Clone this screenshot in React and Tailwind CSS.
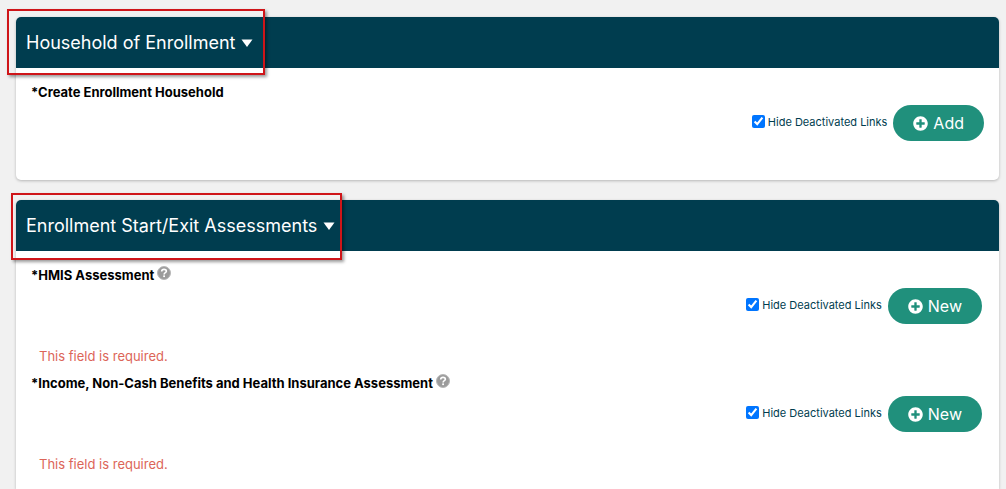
import { useState } from 'react'
import { FaPlusCircle } from 'react-icons/fa'

function HelpIcon() {
  return (
    <svg viewBox="0 0 14 14" className="w-[14px] h-[14px]" aria-hidden="true">
      <circle cx="7" cy="7" r="6.5" fill="#9b9b9b" stroke="#b8b8b8" />
      <path d="M4.7 5.5C4.7 4 5.700 3.400 7 3.400s2.400.700 2.400 1.900C9.400 6.700 7.100 6.700 7.100 8.400" fill="none" stroke="#ffffff" strokeWidth="1.600" />
      <rect x="6.200" y="9.400" width="1.800" height="1.700" fill="#ffffff" />
    </svg>
  )
}

function Section({ title, highlight, className, children }) {
  const [open, setOpen] = useState(true)

  return (
    <section className={`bg-white shadow-[0_1px_3px_rgba(0,0,0,0.25)] ${className}`}>
      <header className="relative h-[51px] flex items-center px-[10px] rounded-t-[5px] bg-[#003d4f]">
        <h2>
          <button
            type="button"
            aria-expanded={open}
            onClick={() => setOpen(!open)}
            className="flex items-center gap-[6px] text-[18px] leading-6 text-white cursor-pointer"
          >
            {title}
            <svg viewBox="0 0 12 8" className="w-3 h-2" aria-hidden="true">
              <path d="M0.500 0.500h11L6 8z" fill="#ffffff" />
            </svg>
          </button>
        </h2>
        <div className={`absolute border-2 border-[#cf1519] shadow-[2px_2px_3px_rgba(0,0,0,0.4)] pointer-events-none ${highlight}`} />
      </header>
      {open && children}
    </section>
  )
}

function Field({ id, label, action, help, error }) {
  return (
    <div>
      <div className="flex items-center gap-[3px] h-5 text-[13px] leading-5 font-bold text-black">
        <h3>*{label}</h3>
        {help && (
          <button type="button" aria-label={`Help for ${label}`} className="pb-1 cursor-pointer">
            <HelpIcon />
          </button>
        )}
      </div>
      <div className="mt-[3px] flex items-center justify-end gap-[6px]">
        <div className="flex items-center gap-[3px] pb-[3px]">
          <input id={id} type="checkbox" defaultChecked className="w-[13px] h-[13px]" />
          <label htmlFor={id} className="text-[11px] leading-4 text-[#003d4f]">Hide Deactivated Links</label>
        </div>
        <button
          type="button"
          className="h-9 flex items-center gap-[5px] px-5 rounded-full bg-[#20907c] text-[16px] leading-6 text-white cursor-pointer"
        >
          <FaPlusCircle size={15} />
          {action}
        </button>
      </div>
      {error && <p className="mt-[22px] mb-[7px] pl-2 text-[13px] leading-5 text-[#dc6558]">{error}</p>}
    </div>
  )
}

export default function App() {
  return (
    <main className="min-h-screen flex flex-col gap-5 pt-[17px] pl-4 pr-[7px] bg-[#f1f1f1] font-['Inter',sans-serif]">
      <Section
        title="Household of Enrollment"
        highlight="-left-[9px] -top-[8px] w-[258px] h-[66px]"
        className="rounded-[5px]"
      >
        <div className="px-[15px] pt-[14px] pb-[39px]">
          <Field id="hide-household" label="Create Enrollment Household" action="Add" />
        </div>
      </Section>

      <Section
        title="Enrollment Start/Exit Assessments"
        highlight="-left-[5px] -top-[7px] w-[331px] h-[67px]"
        className="flex-1 rounded-t-[5px]"
      >
        <div className="pl-[15px] pr-[17px] pt-[14px]">
          <Field id="hide-hmis" label="HMIS Assessment" action="New" help error="This field is required." />
          <Field
            id="hide-income"
            label="Income, Non-Cash Benefits and Health Insurance Assessment"
            action="New"
            help
            error="This field is required."
          />
        </div>
      </Section>
    </main>
  )
}
